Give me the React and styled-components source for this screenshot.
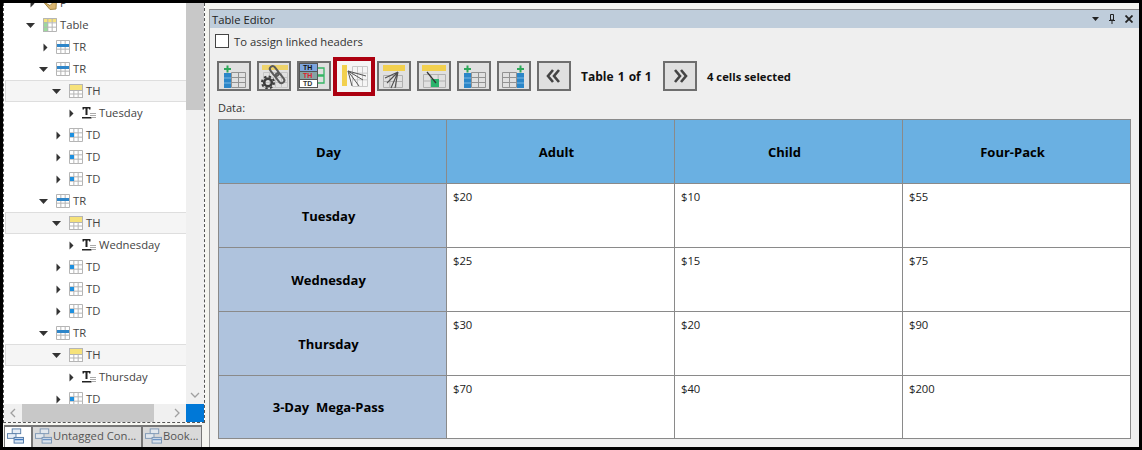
import React from 'react';
import styled, { createGlobalStyle } from 'styled-components';

const Global = createGlobalStyle`
html, body { margin: 0; padding: 0; background: #000; }
body { font-family: "Open Sans", "Noto Sans", "Liberation Sans", sans-serif; }
`;

const Frame = styled.div`
box-sizing: border-box;
width: 1142px;
height: 450px;
border: 3px solid #000;
background: #f5f5f0;
display: flex;
overflow: hidden;
`;

const LeftPane = styled.div`
width: 202px;
height: 444px;
display: flex;
flex-direction: column;
flex-shrink: 0;
`;

const TreeBox = styled.div`
box-sizing: border-box;
height: 420px;
background: #fff;
border-left: 1px dashed #555;
border-right: 1px dashed #555;
border-bottom: 1px dashed #555;
display: grid;
grid-template-columns: 182px 18px;
grid-template-rows: 401px 18px;
`;

const TreeList = styled.ul`
list-style: none;
margin: 0;
padding: 0;
overflow: hidden;
`;

const Row = styled.li`
box-sizing: border-box;
height: 22px;
display: flex;
align-items: center;
font-size: 11.25px;
color: #444;
padding-left: ${(p) => 15 + p.$level * 13}px;
margin-left: 1px;
border-top: 1px solid ${(p) => (p.$selected ? '#dedede' : 'transparent')};
border-bottom: 1px solid ${(p) => (p.$selected ? '#dedede' : 'transparent')};
border-left: 1px solid ${(p) => (p.$selected ? '#dedede' : 'transparent')};
background: ${(p) => (p.$selected ? '#f5f5f5' : 'transparent')};

&:first-child {
  margin-top: -11px;
}
`;

const Arrow = styled.span`
box-sizing: border-box;
width: 22px;
height: 10px;
padding-right: ${(p) => (p.$open ? 4 : 0)}px;
flex-shrink: 0;
display: flex;
align-items: center;
justify-content: center;
`;

const RowLabel = styled.span`
margin-left: 3px;
padding-bottom: 2px;
white-space: nowrap;
`;

const VTrack = styled.div`
background: #f0f0f0;
display: flex;
flex-direction: column;
align-items: stretch;
`;

const VThumb = styled.div`
height: 107px;
background: #c8c8c8;
`;

const VDown = styled.div`
margin-top: auto;
height: 18px;
display: flex;
align-items: center;
justify-content: center;
`;

const HTrack = styled.div`
background: #f0f0f0;
display: grid;
grid-template-columns: 18px 132px 1fr 18px;
align-items: stretch;
`;

const HThumb = styled.div`
background: #c8c8c8;
grid-column: 2;
`;

const ScrollBtn = styled.div`
display: flex;
align-items: center;
justify-content: center;
`;

const Corner = styled.div`
background: #0078d7;
`;

const TabStrip = styled.div`
display: flex;
height: 24px;
padding: 2px 0 0 1px;
box-sizing: border-box;
`;

const Tab = styled.div`
box-sizing: border-box;
width: ${(p) => p.$width}px;
height: 22px;
display: flex;
align-items: center;
gap: 1px;
padding: 0 0 3px 2px;
font-size: 11.25px;
color: #555;
white-space: nowrap;
overflow: hidden;
background: ${(p) => (p.$active ? '#fff' : '#d9d9d9')};
border: 1px solid #777;
border-width: 2px 1px 0 1px;
`;

const RightPane = styled.div`
margin-left: 4px;
flex: 1;
min-width: 0;
display: flex;
flex-direction: column;
padding-top: 6px;
`;

const Panel = styled.div`
flex: 1;
background: #efefef;
border-left: 1px solid #999;
display: flex;
flex-direction: column;
`;

const TitleBar = styled.div`
box-sizing: border-box;
height: 19px;
background: #bfcddb;
border-top: 1px solid #888;
display: flex;
align-items: center;
justify-content: space-between;
padding: 0 6px 0 2px;
font-size: 11.25px;
color: #222;
`;

const TitleIcons = styled.div`
display: flex;
align-items: center;
gap: 10px;
`;

const CheckRow = styled.label`
display: flex;
align-items: center;
gap: 5px;
height: 14px;
margin: 6px 0 0 5px;
font-size: 11.25px;
color: #333;
`;

const CheckBox = styled.span`
box-sizing: border-box;
width: 14px;
height: 14px;
background: #fff;
border: 1px solid #444;
`;

const Toolbar = styled.div`
display: flex;
align-items: center;
height: 42px;
margin: 7px 0 0 7px;
`;

const ToolButton = styled.div`
box-sizing: border-box;
width: 34px;
height: 30px;
margin-right: 6px;
background: #e0e0e0;
border: 2px solid #6e6e6e;
display: flex;
align-items: center;
justify-content: center;
flex-shrink: 0;
`;

const ActiveButton = styled.div`
box-sizing: border-box;
width: 42px;
height: 39px;
margin: 0 2px 0 -4px;
background: #f5f5f5;
border: 4px solid #ac0010;
display: flex;
align-items: center;
justify-content: center;
flex-shrink: 0;
`;

const Pager = styled.span`
box-sizing: border-box;
width: ${(p) => p.$width}px;
padding-left: 4px;
font-size: ${(p) => p.$size}px;
font-weight: 700;
word-spacing: ${(p) => p.$wordSpacing || 0}px;
color: #111;
white-space: nowrap;
`;

const DataLabel = styled.div`
font-size: 11px;
color: #333;
margin: 3px 0 0 8px;
height: 15px;
line-height: 15px;
`;

const Grid = styled.table`
border-collapse: collapse;
table-layout: fixed;
width: 913px;
margin: 4px 0 0 8px;
`;

const HeadCell = styled.th`
box-sizing: border-box;
width: 228px;
height: 64px;
padding: 0 8px 0 0;
background: #6ab0e2;
border: 1px solid #8a8a8a;
font-size: 13px;
font-weight: 700;
color: #000;
text-align: center;
`;

const RowHead = styled.th`
box-sizing: border-box;
height: ${(p) => p.$height}px;
padding: 0 8px 0 0;
background: #afc3dd;
border: 1px solid #8a8a8a;
font-size: 13px;
font-weight: 700;
color: #000;
text-align: center;
white-space: pre;
`;

const Cell = styled.td`
box-sizing: border-box;
background: #fff;
border: 1px solid #8a8a8a;
font-size: 11.25px;
color: #222;
vertical-align: top;
padding: 5px 6px;
`;

const Right = () => (
  <svg width="5" height="9" viewBox="0 0 5 9"><path d="M0.5 0.5 L4.5 4.5 L0.5 8.5Z" fill="#333" /></svg>
);

const Down = () => (
  <svg width="9" height="5" viewBox="0 0 9 5"><path d="M0 0 H9 L4.5 5Z" fill="#333" /></svg>
);

const GridLines = ({ x = 0, y = 0, w = 14, h = 14, cols = 3, rows = 3, color = '#aaa' }) => {
  const lines = [];
  for (let i = 0; i <= cols; i += 1) {
    const lx = x + (w * i) / cols;
    lines.push(<line key={`c${i}`} x1={lx} y1={y} x2={lx} y2={y + h} stroke={color} />);
  }
  for (let i = 0; i <= rows; i += 1) {
    const ly = y + (h * i) / rows;
    lines.push(<line key={`r${i}`} x1={x} y1={ly} x2={x + w} y2={ly} stroke={color} />);
  }
  return <g>{lines}</g>;
};

const TableIcon = () => (
  <svg width="14" height="14" viewBox="0 0 14 14">
    <rect x="0" y="0" width="14" height="14" fill="#fff" />
    <rect x="0" y="0" width="14" height="4" fill="#f6e27a" />
    <rect x="0" y="4" width="5" height="10" fill="#9bdc9b" />
    <GridLines x={0.5} y={0.5} w={13} h={13} rows={3} cols={3} color="#b5b5b5" />
  </svg>
);

const TrIcon = () => (
  <svg width="14" height="14" viewBox="0 0 14 14">
    <rect x="0" y="0" width="14" height="14" fill="#fff" />
    <GridLines x={0.5} y={0.5} w={13} h={13} rows={3} cols={3} color="#b5b5b5" />
    <rect x="1" y="4" width="12" height="3" fill="#2f86c9" />
  </svg>
);

const ThIcon = () => (
  <svg width="14" height="14" viewBox="0 0 14 14">
    <rect x="0" y="0" width="14" height="14" fill="#fff" />
    <GridLines x={0.5} y={6.5} w={13} h={7} rows={2} cols={3} color="#b5b5b5" />
    <rect x="0" y="0" width="14" height="6" fill="#f6e27a" />
    <rect x="0.5" y="0.5" width="13" height="13" fill="none" stroke="#b5b5b5" />
  </svg>
);

const TdIcon = () => (
  <svg width="14" height="14" viewBox="0 0 14 14">
    <rect x="0" y="0" width="14" height="14" fill="#fff" />
    <GridLines x={0.5} y={0.5} w={13} h={13} rows={3} cols={3} color="#b5b5b5" />
    <rect x="1" y="5" width="4" height="4" fill="#1e90df" />
  </svg>
);

const TextIcon = () => (
  <svg width="14" height="14" viewBox="0 0 14 14">
    <path d="M0.5 1 H8.5 V3.5 H7 V2.5 H5.5 V9 H3.5 V2.5 H2 V3.5 H0.5Z" fill="#222" />
    <rect x="0" y="11" width="9.5" height="1.5" fill="#222" />
    <path d="M8 7.5 H14 M8 9.5 H14 M10 11.5 H14" stroke="#aaa" strokeWidth="1" />
  </svg>
);

const FolderIcon = () => (
  <svg width="14" height="14" viewBox="0 0 14 14">
    <path d="M0.5 6 L7 9.5 L13.5 3 L13 13 L7 13.5 Z" fill="#d9b56f" stroke="#a58845" />
  </svg>
);

const icons = { p: FolderIcon, table: TableIcon, tr: TrIcon, th: ThIcon, td: TdIcon, text: TextIcon };

const treeRows = [
  { level: 0, kind: 'p', label: 'P', open: false },
  { level: 0, kind: 'table', label: 'Table', open: true },
  { level: 1, kind: 'tr', label: 'TR', open: false },
  { level: 1, kind: 'tr', label: 'TR', open: true },
  { level: 2, kind: 'th', label: 'TH', open: true, selected: true },
  { level: 3, kind: 'text', label: 'Tuesday', open: false },
  { level: 2, kind: 'td', label: 'TD', open: false },
  { level: 2, kind: 'td', label: 'TD', open: false },
  { level: 2, kind: 'td', label: 'TD', open: false },
  { level: 1, kind: 'tr', label: 'TR', open: true },
  { level: 2, kind: 'th', label: 'TH', open: true, selected: true },
  { level: 3, kind: 'text', label: 'Wednesday', open: false },
  { level: 2, kind: 'td', label: 'TD', open: false },
  { level: 2, kind: 'td', label: 'TD', open: false },
  { level: 2, kind: 'td', label: 'TD', open: false },
  { level: 1, kind: 'tr', label: 'TR', open: true },
  { level: 2, kind: 'th', label: 'TH', open: true, selected: true },
  { level: 3, kind: 'text', label: 'Thursday', open: false },
  { level: 2, kind: 'td', label: 'TD', open: false },
];

const TabIcon = ({ faded }) => (
  <svg width="17" height="16" viewBox="0 0 18 16" style={{ flexShrink: 0 }}>
    <g opacity={faded ? 0.7 : 1}>
      <rect x="5.5" y="0.5" width="9" height="5" fill="#e6edf6" stroke="#5b7fa8" />
      <rect x="0.5" y="5.5" width="9" height="5" fill="#e6edf6" stroke="#5b7fa8" />
      <rect x="7.5" y="9.5" width="10" height="6" fill="#dbe7f4" stroke="#4f77a6" />
      <rect x="8" y="11" width="9" height="1.5" fill="#3f78c0" />
    </g>
  </svg>
);

const Plus = ({ x, y }) => (
  <path d={`M${x - 3.5} ${y} H${x + 3.5} M${x} ${y - 3.5} V${y + 3.5}`} stroke="#2ea85a" strokeWidth="2" />
);

const AddColumnLeft = () => (
  <svg width="26" height="26" viewBox="0 0 26 26">
    <GridLines x={10.5} y={9.5} w={14} h={15} cols={2} rows={3} color="#929292" />
    <rect x="3" y="10" width="7" height="15" fill="#2b86c8" />
    <path d="M3 15 H10 M3 20 H10" stroke="#7db9e4" />
    <Plus x={6.5} y={6} />
  </svg>
);

const AddColumnRight = () => (
  <svg width="26" height="26" viewBox="0 0 26 26">
    <GridLines x={1.5} y={9.5} w={14} h={15} cols={2} rows={3} color="#929292" />
    <rect x="16" y="10" width="7" height="15" fill="#2b86c8" />
    <path d="M16 15 H23 M16 20 H23" stroke="#7db9e4" />
    <Plus x={19.5} y={6} />
  </svg>
);

const LinkGear = () => (
  <svg width="30" height="26" viewBox="0 0 30 26">
    <rect x="3" y="2" width="26" height="5" fill="#eed36a" />
    <GridLines x={4.5} y={9.5} w={24} h={15} cols={4} rows={3} color="#c4c4c4" />
    <g fill="none" stroke="#5a5a5a" strokeWidth="2">
      <rect x="-3" y="-2.5" width="11" height="5.5" rx="2.7" transform="translate(14 6) rotate(52)" />
      <rect x="-3" y="-2.5" width="11" height="5.5" rx="2.7" transform="translate(19.5 13) rotate(52)" />
    </g>
    <circle cx="9" cy="19.5" r="3.8" fill="none" stroke="#3d3d3d" strokeWidth="2.6" />
    <circle cx="9" cy="19.5" r="6" fill="none" stroke="#3d3d3d" strokeWidth="2" strokeDasharray="2.4 2.3" />
  </svg>
);

const HeaderCycle = () => (
  <svg width="30" height="26" viewBox="0 0 30 26">
    <rect x="0.5" y="0.5" width="18" height="8" fill="#7ea6de" stroke="#555" />
    <rect x="0.5" y="8.5" width="18" height="8" fill="#86a3a3" stroke="#555" />
    <rect x="0.5" y="16.5" width="18" height="8" fill="#fff" stroke="#555" />
    <text x="4" y="7" fontSize="7" fontWeight="700" fontFamily="Liberation Sans" fill="#111">TH</text>
    <text x="4" y="15" fontSize="7" fontWeight="700" fontFamily="Liberation Sans" fill="#e0202a">TH</text>
    <text x="4" y="23" fontSize="7" fontWeight="700" fontFamily="Liberation Sans" fill="#333">TD</text>
    <path d="M19 5 H25 V12 H19 M19 13 H25 V20 H19" fill="none" stroke="#36b565" strokeWidth="1.3" />
  </svg>
);

const RowHeaderLinks = () => (
  <svg width="30" height="28" viewBox="0 0 30 28">
    <rect x="3" y="3" width="5" height="21" fill="#f2d04e" />
    <GridLines x={13.5} y={4.5} w={15} h={20} cols={3} rows={3} color="#c8c8c8" />
    <path d="M9 9 L27 14 M9 9 L24 18 M9 9 L20 24 M9 9 L13 24" stroke="#555" strokeWidth="1" />
  </svg>
);

const ColHeaderLinks = () => (
  <svg width="28" height="26" viewBox="0 0 28 26">
    <rect x="3" y="2" width="22" height="6" fill="#f2d04e" />
    <GridLines x={3.5} y={12.5} w={19} h={12} cols={3} rows={2} color="#b0b0b0" />
    <path d="M18 9 L5 15 M18 9 L11 25 M18 9 L15 25 M18 9 L7 20" stroke="#505050" strokeWidth="1.1" />
  </svg>
);

const HeaderToCell = () => (
  <svg width="28" height="26" viewBox="0 0 28 26">
    <rect x="2" y="2" width="24" height="6" fill="#f2d04e" />
    <GridLines x={3.5} y={11.5} w={22} h={13} cols={3} rows={2} color="#b0b0b0" />
    <rect x="11" y="16" width="8" height="8" fill="#2ab36c" />
    <path d="M7 9 L16 20" stroke="#333" strokeWidth="1.2" />
  </svg>
);

const DoubleLeft = () => (
  <svg width="20" height="16" viewBox="0 0 20 16">
    <path d="M9 2 L4 8 L9 14 M15 2 L10 8 L15 14" fill="none" stroke="#444" strokeWidth="2.6" />
  </svg>
);

const DoubleRight = () => (
  <svg width="20" height="16" viewBox="0 0 20 16">
    <path d="M5 2 L10 8 L5 14 M11 2 L16 8 L11 14" fill="none" stroke="#444" strokeWidth="2.6" />
  </svg>
);

const Chevron = ({ d }) => (
  <svg width="10" height="10" viewBox="0 0 10 10"><path d={d} fill="none" stroke="#a0a0a0" strokeWidth="1.3" /></svg>
);

const tableRows = [
  { day: 'Tuesday', height: 64, values: ['$20', '$10', '$55'] },
  { day: 'Wednesday', height: 64, values: ['$25', '$15', '$75'] },
  { day: 'Thursday', height: 64, values: ['$30', '$20', '$90'] },
  { day: '3-Day  Mega-Pass', height: 63, values: ['$70', '$40', '$200'] },
];

const App = () => (
  <>
    <Global />
    <Frame>
      <LeftPane>
        <TreeBox>
          <TreeList>
            {treeRows.map((row, i) => {
              const Icon = icons[row.kind];
              return (
                <Row key={i} $level={row.level} $selected={row.selected}>
                  <Arrow $open={row.open}>{row.open ? <Down /> : <Right />}</Arrow>
                  <Icon />
                  <RowLabel>{row.label}</RowLabel>
                </Row>
              );
            })}
          </TreeList>
          <VTrack>
            <VThumb />
            <VDown><Chevron d="M1 3 L5 7 L9 3" /></VDown>
          </VTrack>
          <HTrack>
            <ScrollBtn><Chevron d="M7 1 L3 5 L7 9" /></ScrollBtn>
            <HThumb />
            <span />
            <ScrollBtn><Chevron d="M3 1 L7 5 L3 9" /></ScrollBtn>
          </HTrack>
          <Corner />
        </TreeBox>
        <TabStrip>
          <Tab $width={28} $active><TabIcon /></Tab>
          <Tab $width={110}><TabIcon faded />Untagged Con...</Tab>
          <Tab $width={60}><TabIcon faded />Book...</Tab>
        </TabStrip>
      </LeftPane>
      <RightPane>
        <Panel>
          <TitleBar>
            <span>Table Editor</span>
            <TitleIcons>
              <svg width="7" height="4" viewBox="0 0 7 4"><path d="M0 0 H7 L3.5 4Z" fill="#222" /></svg>
              <svg width="6" height="10" viewBox="0 0 6 10"><path d="M1.5 0.5 H4.5 V6 H1.5Z M0 6.5 H6 M3 7 V10" fill="none" stroke="#222" /></svg>
              <svg width="8" height="8" viewBox="0 0 8 8"><path d="M0.5 0.5 L7.5 7.5 M7.5 0.5 L0.5 7.5" stroke="#222" strokeWidth="1.8" /></svg>
            </TitleIcons>
          </TitleBar>
          <CheckRow>
            <CheckBox />
            To assign linked headers
          </CheckRow>
          <Toolbar>
            <ToolButton><AddColumnLeft /></ToolButton>
            <ToolButton><LinkGear /></ToolButton>
            <ToolButton><HeaderCycle /></ToolButton>
            <ActiveButton><RowHeaderLinks /></ActiveButton>
            <ToolButton><ColHeaderLinks /></ToolButton>
            <ToolButton><HeaderToCell /></ToolButton>
            <ToolButton><AddColumnLeft /></ToolButton>
            <ToolButton><AddColumnRight /></ToolButton>
            <ToolButton><DoubleLeft /></ToolButton>
            <Pager $width={86} $size={12} $wordSpacing={1}>Table 1 of 1</Pager>
            <ToolButton><DoubleRight /></ToolButton>
            <Pager $width={110} $size={11.25}>4 cells selected</Pager>
          </Toolbar>
          <DataLabel>Data:</DataLabel>
          <Grid>
            <thead>
              <tr>
                <HeadCell>Day</HeadCell>
                <HeadCell>Adult</HeadCell>
                <HeadCell>Child</HeadCell>
                <HeadCell>Four-Pack</HeadCell>
              </tr>
            </thead>
            <tbody>
              {tableRows.map((row) => (
                <tr key={row.day}>
                  <RowHead $height={row.height}>{row.day}</RowHead>
                  {row.values.map((value, i) => (
                    <Cell key={i}>{value}</Cell>
                  ))}
                </tr>
              ))}
            </tbody>
          </Grid>
        </Panel>
      </RightPane>
    </Frame>
  </>
);

export default App;
